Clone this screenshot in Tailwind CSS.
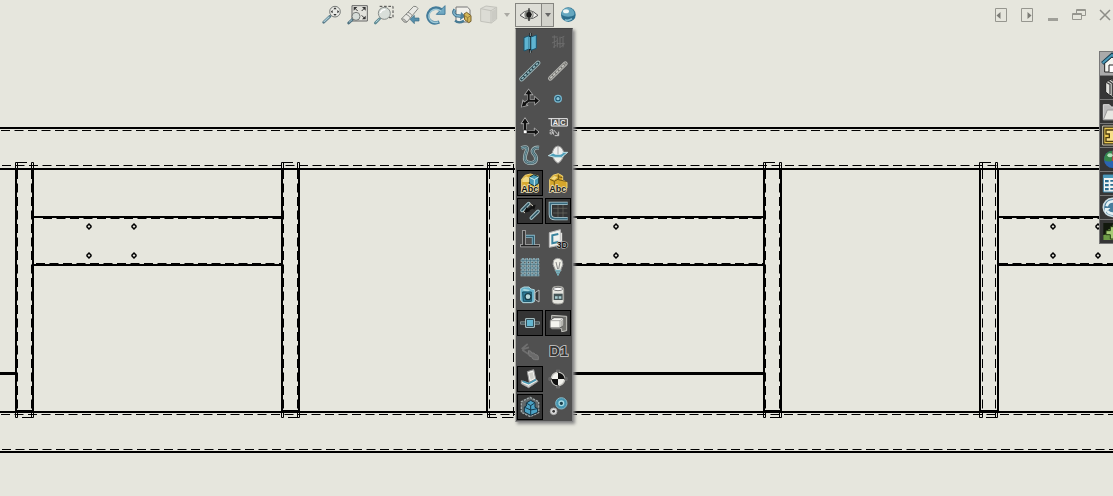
<!DOCTYPE html>
<html lang="en">
<head>
    <meta charset="UTF-8">
    <meta name="viewport" content="width=device-width, initial-scale=1.0">
    <title>Drawing View</title>
    <script src="https://cdn.jsdelivr.net/npm/@tailwindcss/browser@4"></script>
</head>
<body class="bg-[#e6e6dd] overflow-hidden">
<main class="relative min-h-screen overflow-hidden">

    <!-- Sheet -->
    <svg class="absolute inset-0 w-full h-full" fill="none" stroke="#000" aria-label="Frame drawing">
        <defs>
            <g id="holes"><path d="M0 224l2 2v1l-2 2-2-2v-1zM0 253l2 2v1l-2 2-2-2v-1z"/></g>
            <!-- narrow post, 18 wide -->
            <g id="post">
                <path stroke-width="2" d="M1 168V413M18 168V413"/>
                <path stroke-dasharray="9 4.5" d="M2.5 170V410M16.5 170V410"/>
                <path d="M.5 168V162.5H12M2.5 163V168M16.5 168V162.5H18.5V168M.5 412V417.5H2.5V412M16.5 412V417.5M18.5 412V417.5H7"/>
                <path stroke-width="3" d="M1 411.5H18"/>
            </g>
            <!-- wide post, 20 wide -->
            <g id="widepost">
                <path stroke-width="2" d="M1 168V413M19 168V413"/>
                <path stroke-dasharray="9 4.5" d="M3.5 170V410M16.5 170V410"/>
                <path d="M.5 168V162.5H12M3.5 163V168M16.5 168V162.5H18.5V168M.5 412V417.5H3.5V412M16.5 412V417.5M18.5 412V417.5H7"/>
                <path stroke-width="3" d="M1 411.5H19"/>
            </g>
        </defs>
        <g stroke-width="2">
            <line x1="0" y1="128" x2="100%" y2="128"/>
            <line x1="0" y1="169" x2="100%" y2="169"/>
            <line x1="0" y1="412" x2="100%" y2="412"/>
            <line x1="0" y1="452" x2="100%" y2="452"/>
            <path d="M34 217H282M34 265H282M573 217H764M573 265H764"/>
            <line x1="998" y1="217" x2="100%" y2="217"/>
            <line x1="998" y1="265" x2="100%" y2="265"/>
        </g>
        <g stroke-dasharray="9 4.5">
            <line x1="1" y1="130.500" x2="100%" y2="130.500"/>
            <line x1="2" y1="165.500" x2="100%" y2="165.500"/>
            <line x1="1" y1="414.500" x2="100%" y2="414.500"/>
            <line x1="2" y1="449.500" x2="100%" y2="449.500"/>
            <path d="M43 218.500H282M36 263.500H282M577 218.500H764M573 263.500H764"/>
            <line x1="1003" y1="218.500" x2="100%" y2="218.500"/>
            <line x1="999" y1="263.500" x2="100%" y2="263.500"/>
        </g>
        <path stroke-width="3" d="M0 373.500H16M573 373.500H764"/>
        <use href="#post" x="15"/>
        <use href="#post" x="281"/>
        <use href="#post" x="763"/>
        <use href="#widepost" x="979"/>
        <path stroke-width="2" d="M487 168V413"/>
        <path d="M487.500 168V162.500H499M503 162.500H513.500M489.500 163V168M487.500 412V417.500H497M502 417.500H513.500M489.500 412V417"/>
        <path stroke-dasharray="9 4.5" d="M489.500 170V412M513.500 164V417"/>
        <g stroke-width="1.5">
            <use href="#holes" x="89"/><use href="#holes" x="134"/><use href="#holes" x="616"/><use href="#holes" x="1053"/><use href="#holes" x="1098"/>
        </g>
    </svg>

    <header class="relative flex items-start pl-[319px] pt-[3px]">
        <nav class="flex h-6 items-center [&_svg]:block" aria-label="View toolbar">
            <button class="w-[26px] pl-0.5" aria-label="Zoom to fit">
                <svg class="w-[22px] h-[22px]" viewBox="0 0 66 66">
                    <path d="M8 55L27 37" stroke="#4f7280" stroke-width="8" stroke-linecap="round"/><path d="M9 53L24 39" stroke="#a9cad4" stroke-width="4" stroke-linecap="round"/>
                    <circle cx="42" cy="23" r="16" fill="#e9eae5" stroke="#777a78" stroke-width="3"/>
                    <path d="M42 10l5 6H37zM42 36l5-6H37zM29 23l6-5v10zM55 23l-6-5v10z" fill="#333"/>
                </svg>
            </button>
            <button class="w-[26px] pl-0.5" aria-label="Zoom to area">
                <svg class="w-[22px] h-[22px]" viewBox="0 0 66 66">
                    <path d="M15 5h46v46H15z" fill="#e2e2dc" stroke="#666" stroke-width="3"/>
                    <path d="M20 9h11L20 20zM56 9v11L45 9zM56 46H45l11-11z" fill="#333"/><path d="M24 13l8 8M52 13l-8 8M52 42l-8-8" stroke="#333" stroke-width="3"/>
                    <path d="M5 57L17 46" stroke="#4f7280" stroke-width="8" stroke-linecap="round"/><path d="M6 55L15 47" stroke="#a9cad4" stroke-width="3"/>
                    <circle cx="27" cy="37" r="12" fill="#d6dcd8" stroke="#777a78" stroke-width="3"/>
                </svg>
            </button>
            <button class="w-[26px] pl-0.5" aria-label="Zoom in or out">
                <svg class="w-[22px] h-[22px]" viewBox="0 0 66 66">
                    <path d="M20 7h40v34H45" fill="none" stroke="#444" stroke-width="3" stroke-dasharray="8 5"/>
                    <path d="M7 57L20 44" stroke="#5b8791" stroke-width="8" stroke-linecap="round"/><path d="M8 55L19 45" stroke="#b4d5dc" stroke-width="3"/>
                    <circle cx="34" cy="28" r="18" fill="#d9dfda" stroke="#898e8b" stroke-width="3"/><path d="M22 27q4-11 15-10" stroke="#fff" stroke-width="4" fill="none"/>
                </svg>
            </button>
            <button class="w-[26px] pl-0.5" aria-label="Previous view">
                <svg class="w-[22px] h-[22px]" viewBox="0 0 66 66">
                    <path d="M8 44L44 7q9-2 13 7L24 54q-12 3-16-10z" fill="#e9e9e4" stroke="#858783" stroke-width="3"/>
                    <path d="M27 25q9 2 12 10M21 31q9 2 12 10" stroke="#8b8c88" stroke-width="3" fill="none"/><path d="M8 44q8-2 16 10-12 3-16-10z" fill="#b9b9b3" stroke="#858783" stroke-width="2"/>
                    <path d="M33 46l13-12v8h14v9H46v8z" fill="#5790ac" stroke="#396b84" stroke-width="2"/>
                </svg>
            </button>
            <button class="w-[26px] pl-0.5" aria-label="Rotate view">
                <svg class="w-[22px] h-[22px]" viewBox="0 0 66 66">
                    <path d="M43 54C15 65-2 37 16 19q15-14 34-1" fill="none" stroke="#447c9a" stroke-width="10"/>
                    <path d="M60 5v26H34z" fill="#70a9c3" stroke="#447c9a" stroke-width="3"/>
                    <path d="M40 54C17 61 3 38 18 22q14-12 30-1" fill="none" stroke="#a1cbd9" stroke-width="4"/>
                </svg>
            </button>
            <button class="w-[26px] pl-0.5" aria-label="3D drawing view">
                <svg class="w-[22px] h-[22px]" viewBox="0 0 66 66">
                    <path d="M15 9h34l8 8v37H15z" fill="#f1f0ea" stroke="#777" stroke-width="3"/>
                    <path d="M12 17q-9 11 4 18l18 2" fill="none" stroke="#356985" stroke-width="10"/><path d="M12 17q-9 11 4 18l18 2" fill="none" stroke="#7eb1c8" stroke-width="5"/><path d="M30 24l14 13-17 12z" fill="#4e819d"/>
                    <path d="M12 50q12 10 27 0" fill="none" stroke="#477b95" stroke-width="7"/>
                    <path d="M39 30l8-5 13 10v17l-7 4-12-9z" fill="#d4b758" stroke="#79622e" stroke-width="3"/><path d="M41 35l9 6 8-5M50 42v11" stroke="#79622e" stroke-width="2" fill="none"/>
                </svg>
            </button>
            <button class="w-[26px] pl-0.5" aria-label="Display style">
                <svg class="w-[22px] h-[22px]" viewBox="0 0 66 66">
                    <path d="M11 14L27 6l32 4v35L43 57 11 52z" fill="#dcdcd5" stroke="#c2c2bb" stroke-width="3"/><path d="M11 14l31 6 17-10M42 20v37" stroke="#c2c2bb" stroke-width="3" fill="none"/><path d="M45 22l12-8v30l-12 9z" fill="#cbcbc4"/>
                </svg>
            </button>
            <button class="flex w-3 justify-center" aria-label="Display style options"><svg class="w-[6px] h-1" viewBox="0 0 6 4"><path d="M0 0h6L3 4z" fill="#aaa9a3"/></svg></button>
            <div class="relative ml-0.5">
                <div class="flex h-6 w-[39px] border border-[#858580] bg-[#deded7]">
                    <button class="flex w-[26px] items-center justify-center border-r border-[#858580]" aria-label="Hide or show items">
                        <svg class="w-5 h-5" viewBox="0 0 60 60">
                            <path d="M3 31Q28 2 57 31Q30 53 3 31z" fill="#efefeb" stroke="#555" stroke-width="3"/>
                            <circle cx="30" cy="29" r="14" fill="#858782"/><circle cx="30" cy="29" r="8" fill="#171717"/><path d="M30 10v38" stroke="#222" stroke-width="4"/><path d="M36 20q9 8 0 18" stroke="#c5c5bf" stroke-width="3" fill="none"/>
                        </svg>
                    </button>
                    <button class="flex flex-1 items-center justify-center bg-[#d2d2cb]" aria-label="Open visibility menu"><svg class="w-[6px] h-1" viewBox="0 0 6 4"><path d="M0 0h6L3 4z" fill="#666"/></svg></button>
                </div>

                <!-- Hide/show menu, two columns of toggles -->
                <div class="absolute left-0 top-[25px] z-10 grid w-[58px] grid-cols-[26px_26px] auto-rows-[26px] gap-0.5 border border-l-[#b0b0aa] border-t-[#444] border-r-[#858585] border-b-[#858585] bg-[#505050] p-px shadow-[2px_2px_3px_#888] [&_button]:flex [&_button]:items-center [&_button]:justify-center [&_svg]:h-[22px] [&_svg]:w-[22px] [&_svg]:shrink-0">
                    <button aria-label="Planes"><svg viewBox="0 0 66 66"><path d="M34 3v59" stroke="#111" stroke-width="7"/><path d="M15 17l15-6v40l-15 6zM36 15l16-6v40l-16 6z" fill="#5fb4d1" stroke="#1b556f" stroke-width="3"/><path d="M29 15h8v36h-8z" fill="#5fb4d1"/><path d="M34 4v58" stroke="#17313c" stroke-width="3"/><path d="M34 3v9M34 55v8" stroke="#c3d5d6" stroke-width="2"/></svg></button>
                    <button aria-label="Hidden bodies"><svg viewBox="0 0 66 66" fill="none" stroke="#6c6c6c" stroke-width="3"><path d="M15 15h17M22 10v38M31 18v28M39 14v34M48 16v30M15 33l15-7M29 35h24M40 18l12-5M18 46l11-7M40 45l12-8"/></svg></button>
                    <button aria-label="Axes"><svg viewBox="0 0 66 66"><path d="M8 57L57 9" stroke="#a2babd" stroke-width="14" stroke-linecap="round"/><path d="M8 57L57 9" stroke="#243e46" stroke-width="9" stroke-linecap="round"/><path d="M8 57L57 9" stroke="#91b9c0" stroke-width="5" stroke-dasharray="8 4"/></svg></button>
                    <button aria-label="Temporary axes"><svg viewBox="0 0 66 66"><path d="M10 55L55 11" stroke="#b5b5b1" stroke-width="14" stroke-linecap="round"/><path d="M10 55L55 11" stroke="#6a6a67" stroke-width="8" stroke-linecap="round"/><path d="M10 55L55 11" stroke="#c4c4be" stroke-width="5" stroke-dasharray="9 3"/></svg></button>
                    <button aria-label="Coordinate systems"><svg viewBox="0 0 66 66"><g stroke="#aaa" fill="#aaa"><path d="M29 38V15M29 38h23M29 38L14 49" stroke-width="10"/><path d="M29 5l11 15H18zM60 38L48 49V27zM8 56l4-18 13 14z" stroke-width="4"/></g><path d="M29 38V15M29 38h23M29 38L14 49" stroke="#111" stroke-width="6"/><path d="M29 5l10 14H19zM60 38L48 48V28zM8 56l5-16 10 12z" fill="#111"/></svg></button>
                    <button aria-label="Points"><svg viewBox="0 0 66 66"><circle cx="33" cy="32" r="10" fill="#1b536d" stroke="#78b7ce" stroke-width="4"/><circle cx="33" cy="32" r="5" fill="#8dc4d5"/></svg></button>
                    <button aria-label="Origins"><svg viewBox="0 0 66 66"><path d="M18 48V17M18 48h34" stroke="#aaa" stroke-width="11"/><path d="M18 5l12 18H6zM60 48L46 60V36z" fill="#111" stroke="#aaa" stroke-width="3"/><path d="M18 47V18M18 48h31" stroke="#111" stroke-width="7"/><path d="M13 42h11v11H13z" fill="#fff" stroke="#222" stroke-width="2"/></svg></button>
                    <button aria-label="Reference labels"><svg viewBox="0 0 66 66"><path d="M4 8h57v22H13V8M36 8v22" stroke="#eee" stroke-width="3" fill="none"/><text x="17" y="27" font-family="Liberation Sans, sans-serif" font-size="22" font-weight="700" fill="#eee">A</text><text x="40" y="27" font-family="Liberation Sans, sans-serif" font-size="22" font-weight="700" fill="#eee">C</text><path d="M8 44l8-4 4 16M8 50q5-5 10 0-6 8-10 2M20 42l14 15M35 47v12H23" stroke="#ccc" stroke-width="3" fill="none"/></svg></button>
                    <button aria-label="Curves"><svg viewBox="0 0 66 66" fill="none"><path d="M7 12q21-8 16 8c-10 25-6 37 11 37 23 0 19-19 10-28-8-10 1-20 16-18" stroke="#a4b7b9" stroke-width="12"/><path d="M7 12q21-8 16 8c-10 25-6 37 11 37 23 0 19-19 10-28-8-10 1-20 16-18" stroke="#435e66" stroke-width="7"/><path d="M7 12q21-8 16 8c-10 25-6 37 11 37 23 0 19-19 10-28-8-10 1-20 16-18" stroke="#77a2ac" stroke-width="3"/></svg></button>
                    <button aria-label="Parting lines"><svg viewBox="0 0 66 66"><path d="M15 32Q18 8 33 6q16 3 18 26-5 18-18 26-13-7-18-26z" fill="#f0f0eb" stroke="#999" stroke-width="3"/><path d="M4 35l19-10h39L44 40H24z" fill="#4f9fb9" stroke="#c3e0e5" stroke-width="3"/><path d="M19 29Q22 11 33 9q11 3 14 20-14 7-28 0z" fill="#eee"/><path d="M33 9v22" stroke="#aaa" stroke-width="3"/></svg></button>
                    <button class="border border-black bg-[#343434]" aria-label="All annotations"><svg viewBox="0 0 66 66"><path d="M8 22l10-12 16-4 24 6v34L42 58H8z" fill="#d8aa31" stroke="#efd173" stroke-width="3"/><path d="M31 16l13-8 15 6v20l-12 8-16-7z" fill="#4b9bb5" stroke="#0e313d" stroke-width="3"/><path d="M31 16l15 7 13-8M46 23v18" stroke="#d4f0ee" stroke-width="3" fill="none"/><path d="M10 22l11-9 10 4v13H10z" fill="#f0da86"/><text x="7" y="59" font-family="Liberation Sans, sans-serif" font-size="27" font-weight="700" fill="#111" stroke="#eee4ba" stroke-width="4" paint-order="stroke">Abc</text></svg></button>
                    <button aria-label="Top-level annotations"><svg viewBox="0 0 66 66"><path d="M8 22l10-12 16-5 13 7v12l13 7v17L42 58H8z" fill="#d5a62b" stroke="#efd173" stroke-width="3"/><path d="M8 22l14 6 12-7M22 28v12M34 8v15l26 6M34 14l12 3" stroke="#735916" stroke-width="3" fill="none"/><path d="M12 20l9-8 11 3-10 9z" fill="#f3dc83"/><text x="7" y="59" font-family="Liberation Sans, sans-serif" font-size="27" font-weight="700" fill="#222" stroke="#e4d9b5" stroke-width="4" paint-order="stroke">Abc</text></svg></button>
                    <button class="border border-black bg-[#343434]" aria-label="Sketches"><svg viewBox="0 0 66 66"><path d="M9 31L29 11M37 54l20-20" stroke="#a3c0c6" stroke-width="11" stroke-linecap="round"/><path d="M9 31L29 11M37 54l20-20" stroke="#315764" stroke-width="5" stroke-linecap="round"/><path d="M16 38l6-16 12 12zM50 14L34 18l12 12z" fill="#111"/><path d="M22 32L44 20" stroke="#111" stroke-width="7"/><path d="M32 10l10 8M12 34l6 5" stroke="#d8d4c4" stroke-width="3"/></svg></button>
                    <button class="border border-black bg-[#343434]" aria-label="Sketch contour"><svg viewBox="0 0 66 66" fill="none"><path d="M18 25h43M18 39h43M33 14v40M48 14v40" stroke="#6d6d65" stroke-width="2"/><path d="M62 10H10V43q0 13 14 13h38" stroke="#b5cbd0" stroke-width="10"/><path d="M62 10H10V43q0 13 14 13h38" stroke="#35677b" stroke-width="5"/></svg></button>
                    <button aria-label="Sketch relations"><svg viewBox="0 0 66 66"><path d="M15 6v48M4 53h58" stroke="#bbb" stroke-width="10"/><path d="M15 8v43M6 53h54" stroke="#222" stroke-width="5"/><path d="M21 25h22v25" stroke="#8abacb" stroke-width="9" fill="none"/><path d="M21 25h22v25" stroke="#315f72" stroke-width="4" fill="none"/></svg></button>
                    <button aria-label="3D sketch planes"><svg viewBox="0 0 66 66"><path d="M7 14l33-9v46L7 58z" fill="#f0f1ed" stroke="#bbb" stroke-width="3"/><path d="M43 14v25H25" stroke="#e2e2df" stroke-width="5" fill="none"/><path d="M34 18l-18 4v24l18-4" stroke="#39839d" stroke-width="6" fill="none"/><text x="29" y="61" font-family="Liberation Sans, sans-serif" font-size="26" font-weight="700" fill="#111" stroke="#ccc" stroke-width="3" paint-order="stroke">3D</text></svg></button>
                    <button aria-label="Grid"><svg viewBox="0 0 66 66" fill="none"><path d="M5 14h56M5 25h56M5 36h56M5 47h56M5 57h56M12 6v55M23 6v55M34 6v55M45 6v55M56 6v55" stroke="#a2c1c8" stroke-width="7"/><path d="M5 14h56M5 25h56M5 36h56M5 47h56M5 57h56M12 6v55M23 6v55M34 6v55M45 6v55M56 6v55" stroke="#376273" stroke-width="2"/></svg></button>
                    <button aria-label="Lights"><svg viewBox="0 0 66 66"><path d="M24 39Q14 24 20 13q12-12 25 0 7 11-3 26v6H25z" fill="#eeeee6" stroke="#999" stroke-width="3"/><path d="M27 18l5 21M39 18l-4 21" stroke="#888" stroke-width="3"/><path d="M25 44h16M27 50h12M30 56h6" stroke="#77b0bc" stroke-width="5"/></svg></button>
                    <button aria-label="Cameras"><svg viewBox="0 0 66 66"><path d="M5 14l10-5h15l6 6 10 2v36l-8 3H12l-7-7z" fill="#63b0c9" stroke="#b1d3d9" stroke-width="3"/><path d="M9 19l6-5 18 4-6 5z" fill="#a6d6df"/><path d="M11 24h26v28H13z" fill="#327f9c" stroke="#174c61" stroke-width="3"/><circle cx="27" cy="38" r="9" fill="#b8d8db" stroke="#173c49" stroke-width="4"/><path d="M48 26l12-8v36l-12-8z" fill="#333" stroke="#bbb" stroke-width="3"/></svg></button>
                    <button aria-label="Decals"><svg viewBox="0 0 66 66"><path d="M16 15q0-8 17-8t17 8v36q0 9-17 9t-17-9z" fill="#e5e5df" stroke="#a2a29c" stroke-width="3"/><ellipse cx="33" cy="15" rx="14" ry="5" fill="#fff" stroke="#777" stroke-width="3"/><path d="M20 29h27v19H20z" fill="#455456"/><path d="M24 44v-7h8v7zM35 44v-7h8v7z" fill="#a8cdd1"/></svg></button>
                    <button class="border border-black bg-[#343434]" aria-label="Routing points"><svg viewBox="0 0 66 66"><path d="M4 33h58" stroke="#a5b5b7" stroke-width="9"/><path d="M6 33h54" stroke="#26373c" stroke-width="4"/><path d="M20 20h26v26H20z" fill="#173743" stroke="#bad2d5" stroke-width="3"/><path d="M24 24h18v18H24z" fill="#65b6d0"/></svg></button>
                    <button class="border border-black bg-[#343434]" aria-label="Section planes"><svg viewBox="0 0 66 66"><path d="M14 10l45 3v43l-15 3V50H14z" fill="#777772" stroke="#c4c4bf" stroke-width="3"/><path d="M9 25l12-8h29v22l-11 9H9z" fill="#f5f5f0" stroke="#555" stroke-width="3"/><path d="M9 26h30l11-9M39 26v21" stroke="#888" stroke-width="2" fill="none"/><path d="M41 28l8-7v17l-8 7z" fill="#b6b6b0"/></svg></button>
                    <button aria-label="Weld beads"><svg viewBox="0 0 66 66" fill="none"><path d="M8 27l18-15M10 28l20-6M10 30l18 12" stroke="#6f6f6f" stroke-width="5"/><path d="M28 32q9-1 10 7 10-2 10 5 9-1 10 6v9H47q-8-1-9-9-10 0-9-8z" fill="#6a6a6a" stroke="#7c7c7c" stroke-width="3"/></svg></button>
                    <button aria-label="Dimension names"><svg viewBox="0 0 66 66"><text x="7" y="49" font-family="Liberation Sans, sans-serif" font-size="44" font-weight="700" fill="#333" stroke="#ccc" stroke-width="5" paint-order="stroke">D1</text></svg></button>
                    <button class="border border-black bg-[#343434]" aria-label="Bend lines"><svg viewBox="0 0 66 66"><path d="M25 11l19-6 6 28-19 10z" fill="#f1f1ed" stroke="#999" stroke-width="3"/><path d="M30 16l11-4 4 19-10 5z" fill="#d0d0ca"/><path d="M7 38l22 7 22-11 6 6-28 19L7 47z" fill="#f4f4ef" stroke="#999" stroke-width="3"/><path d="M11 40l18 7 22-12" stroke="#4698b4" stroke-width="5" fill="none"/><path d="M9 46l20 9 26-15" stroke="#999" stroke-width="2" fill="none"/></svg></button>
                    <button aria-label="Center of mass"><svg viewBox="0 0 66 66"><path d="M33 5v56M5 33h56" stroke="#aaa" stroke-width="8"/><circle cx="33" cy="33" r="20" fill="#f2f2ee" stroke="#c5c5c0" stroke-width="4"/><path d="M33 33V14A19 19 0 0 1 52 33zM33 33v19A19 19 0 0 1 14 33z" fill="#111"/><path d="M33 5v10M33 51v10M5 33h10M51 33h10" stroke="#222" stroke-width="3"/></svg></button>
                    <button class="border border-black bg-[#343434]" aria-label="Bounding box"><svg viewBox="0 0 66 66"><path d="M33 4l26 13v33L34 62 7 49V17z" fill="#62696b" stroke="#9da6a7" stroke-width="4" stroke-dasharray="7 3"/><path d="M22 21l13-8 13 7v14l8 4v11L35 58 16 48V33l6-3z" fill="#4ba1c4" stroke="#152f3e" stroke-width="3"/><path d="M22 21l13 8 12-8M35 29v13L17 34M35 42l20-4M35 42v15" stroke="#12384b" stroke-width="3" fill="none"/></svg></button>
                    <button aria-label="Simulation symbols"><svg viewBox="0 0 66 66"><circle cx="43" cy="22" r="17" fill="#4696b2" stroke="#85b8c7" stroke-width="3"/><circle cx="43" cy="22" r="7" fill="#193d4a" stroke="#a6dae3" stroke-width="4"/><circle cx="20" cy="46" r="10" fill="#ddd" stroke="#aaa" stroke-width="3"/><circle cx="20" cy="46" r="4" fill="#333"/></svg></button>
                </div>
            </div>
            <button class="ml-px flex w-[26px] justify-center" aria-label="Edit appearance">
                <svg class="w-[18px] h-[18px]" viewBox="0 0 54 54">
                    <circle cx="28" cy="26" r="22" fill="#347795"/><circle cx="27" cy="24" r="19" fill="#65a7bf"/><path d="M7 26q20 12 42 0-3 19-20 19T7 26z" fill="#2c6d8b"/><ellipse cx="21" cy="16" rx="9" ry="6" fill="#eff7f5"/><path d="M18 41q11 5 21-3" stroke="#86bed0" stroke-width="5" fill="none"/>
                </svg>
            </button>
        </nav>

        <div class="-mr-[5px] ml-auto flex h-6 items-center [&_button]:flex [&_button]:w-[26px] [&_button]:justify-center">
            <button aria-label="Previous pane"><svg width="14" height="14" viewBox="0 0 14 14"><path d="M1.500 .5h11v13h-11z" fill="none" stroke="#96968f"/><path d="M6.500 4v7L2.500 7.500z" fill="#7c7c76"/></svg></button>
            <button aria-label="Next pane"><svg width="14" height="14" viewBox="0 0 14 14"><path d="M1.500 .5h11v13h-11z" fill="none" stroke="#96968f"/><path d="M7.500 4v7l4-3.500z" fill="#7c7c76"/></svg></button>
            <button aria-label="Minimize"><svg width="14" height="14" viewBox="0 0 14 14"><path d="M2 10h10v3H2z" fill="#a0a099"/></svg></button>
            <button aria-label="Restore"><svg width="14" height="14" viewBox="0 0 14 14" fill="none" stroke="#96968f"><path d="M.5 5.500h9v6h-9zM4.500 5V1.500h9v6H10M4 2.500h9M1 6.500h8"/></svg></button>
            <button aria-label="Close"><svg width="14" height="14" viewBox="0 0 14 14"><path d="M2 2l10 10M12 2L2 12" stroke="#8d8d87" stroke-width="1.500"/></svg></button>
        </div>
    </header>

    <!-- Task pane tabs, partly beyond the window edge -->
    <aside class="absolute right-0 top-[51px] w-[14px] overflow-hidden border-l border-t border-[#777] bg-[#363636] [&_button]:block [&_button]:h-6 [&_button]:w-6 [&_button]:border-b [&_button]:border-[#777] [&_svg]:h-[23px] [&_svg]:w-6" aria-label="Task pane">
        <button class="bg-[#aaa]" aria-label="Resources"><svg viewBox="0 0 72 69"><path d="M14 34v26h44V34L36 15z" fill="#f4f4ef" stroke="#222" stroke-width="3"/><path d="M27 60V39h14v21" fill="#fff" stroke="#222" stroke-width="3"/><path d="M7 34L36 8l29 26" fill="none" stroke="#173d50" stroke-width="11"/><path d="M8 33L36 9l28 24" fill="none" stroke="#4c9bb9" stroke-width="6"/></svg></button>
        <button aria-label="Design library"><svg viewBox="0 0 72 69"><path d="M17 18l18-9 28 9v34L38 63 24 54l-7-6z" fill="#e2e2dd" stroke="#222" stroke-width="3"/><path d="M17 18l13 7v30M25 14l12 8v38M33 11l12 8v40" fill="none" stroke="#444" stroke-width="4"/></svg></button>
        <button aria-label="File explorer"><svg viewBox="0 0 72 69"><path d="M10 14h18l6 7h28v38H10z" fill="#bbb" stroke="#ddd" stroke-width="3"/><path d="M10 59l12-29h48L60 59z" fill="#e7e7e2" stroke="#999" stroke-width="3"/></svg></button>
        <button aria-label="View palette"><svg viewBox="0 0 72 69"><path d="M8 6h60v57H8z" fill="#2b2616" stroke="#ccc5ae" stroke-width="3"/><path d="M13 11h52v47H13z" fill="#e9c750"/><path d="M18 18h40v12H46v11h12v11H18V41h10V30H18z" fill="#f8e08a" stroke="#4c3c10" stroke-width="4"/></svg></button>
        <button aria-label="Appearances"><svg viewBox="0 0 72 69"><circle cx="38" cy="34" r="26" fill="#2b63b2"/><path d="M12 36Q12 10 38 8l-2 30q-12 6-24-2z" fill="#37864a"/><path d="M38 8a26 26 0 0 1 26 28q-14 8-28 2z" fill="#c83e36"/><ellipse cx="30" cy="22" rx="8" ry="6" fill="#b5dfbd"/></svg></button>
        <button aria-label="Custom properties"><svg viewBox="0 0 72 69"><path d="M10 9h52v51H10z" fill="#f0f4f3" stroke="#3f87aa" stroke-width="3"/><path d="M10 9h52v9H10z" fill="#4c9abb"/><path d="M15 24h11v7H15zM15 36h11v7H15zM15 48h11v7H15zM31 24h26v5H31zM31 36h26v5H31zM31 48h26v5H31z" fill="#286c90"/></svg></button>
        <button aria-label="Forum"><svg viewBox="0 0 72 69"><circle cx="37" cy="34" r="27" fill="#477d9d" stroke="#ccdce2" stroke-width="5"/><path d="M20 31q3-15 18-15 9 0 14 7M54 39q-5 14-17 14-9 0-15-8" fill="none" stroke="#e4f1f4" stroke-width="8"/><path d="M15 52V36h16zM59 17v16H43z" fill="#e4f1f4"/></svg></button>
        <button aria-label="Add-ins"><svg viewBox="0 0 72 69"><path d="M10 9h52v51H10z" fill="#12180d"/><path d="M10 60V45l15-3V28h13V14h24v46z" fill="#6d9b46"/><path d="M31 20h12v12h15v12H43v13H31V44H18V32h13z" fill="#a5cb75" stroke="#263d14" stroke-width="3"/></svg></button>
    </aside>
</main>
</body>
</html>
